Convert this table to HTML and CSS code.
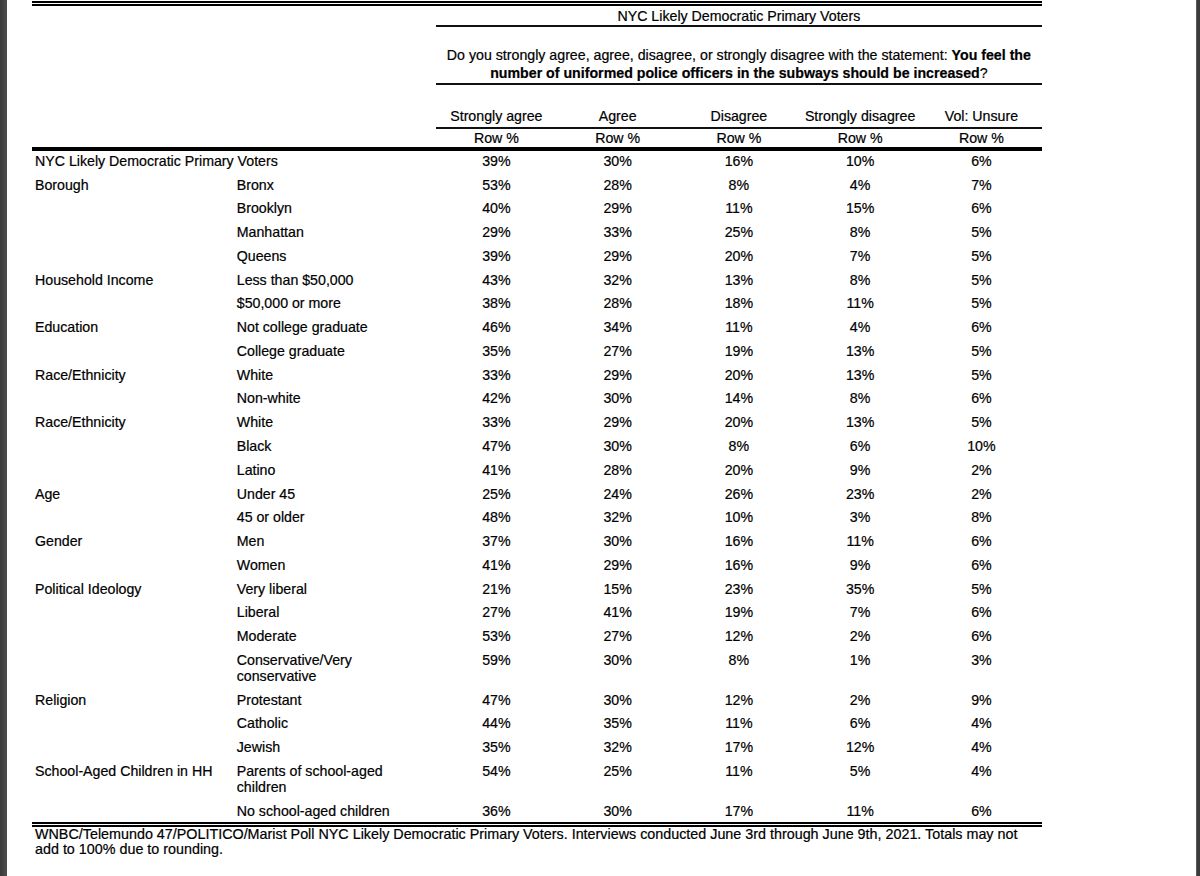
FILE: index.html
```html
<!DOCTYPE html>
<html lang="en">
<head>
<meta charset="utf-8">
<title>NYC Likely Democratic Primary Voters – Marist Poll</title>
<link rel="stylesheet" href="styles.css">
</head>
<body>
<div class="viewer">
  <div class="edge-left"></div>
  <main class="page">
    <table class="poll">
      <colgroup>
        <col class="c1">
        <col class="c2">
        <col class="cd"><col class="cd"><col class="cd"><col class="cd"><col class="cd">
      </colgroup>
      <thead>
        <tr class="r-title">
          <th class="corner" colspan="2" rowspan="4"></th>
          <th class="title" colspan="5">NYC Likely Democratic Primary Voters</th>
        </tr>
        <tr class="r-question">
          <th class="question" colspan="5">Do you strongly agree, agree, disagree, or strongly disagree with the statement: <b>You feel the</b><br><b>number of uniformed police officers in the subways should be increased</b>?</th>
        </tr>
        <tr class="r-cols">
          <th>Strongly agree</th>
          <th>Agree</th>
          <th>Disagree</th>
          <th>Strongly disagree</th>
          <th>Vol: Unsure</th>
        </tr>
        <tr class="r-unit">
          <th>Row %</th><th>Row %</th><th>Row %</th><th>Row %</th><th>Row %</th>
        </tr>
      </thead>
      <tbody>
        <tr class="first">
          <td class="lbl" colspan="2">NYC Likely Democratic Primary Voters</td>
          <td>39%</td><td>30%</td><td>16%</td><td>10%</td><td>6%</td>
        </tr>
        <tr>
          <td class="lbl" rowspan="4">Borough</td>
          <td class="sub">Bronx</td>
          <td>53%</td><td>28%</td><td>8%</td><td>4%</td><td>7%</td>
        </tr>
        <tr>
          <td class="sub">Brooklyn</td>
          <td>40%</td><td>29%</td><td>11%</td><td>15%</td><td>6%</td>
        </tr>
        <tr>
          <td class="sub">Manhattan</td>
          <td>29%</td><td>33%</td><td>25%</td><td>8%</td><td>5%</td>
        </tr>
        <tr>
          <td class="sub">Queens</td>
          <td>39%</td><td>29%</td><td>20%</td><td>7%</td><td>5%</td>
        </tr>
        <tr>
          <td class="lbl" rowspan="2">Household Income</td>
          <td class="sub">Less than $50,000</td>
          <td>43%</td><td>32%</td><td>13%</td><td>8%</td><td>5%</td>
        </tr>
        <tr>
          <td class="sub">$50,000 or more</td>
          <td>38%</td><td>28%</td><td>18%</td><td>11%</td><td>5%</td>
        </tr>
        <tr>
          <td class="lbl" rowspan="2">Education</td>
          <td class="sub">Not college graduate</td>
          <td>46%</td><td>34%</td><td>11%</td><td>4%</td><td>6%</td>
        </tr>
        <tr>
          <td class="sub">College graduate</td>
          <td>35%</td><td>27%</td><td>19%</td><td>13%</td><td>5%</td>
        </tr>
        <tr>
          <td class="lbl" rowspan="2">Race/Ethnicity</td>
          <td class="sub">White</td>
          <td>33%</td><td>29%</td><td>20%</td><td>13%</td><td>5%</td>
        </tr>
        <tr>
          <td class="sub">Non-white</td>
          <td>42%</td><td>30%</td><td>14%</td><td>8%</td><td>6%</td>
        </tr>
        <tr>
          <td class="lbl" rowspan="3">Race/Ethnicity</td>
          <td class="sub">White</td>
          <td>33%</td><td>29%</td><td>20%</td><td>13%</td><td>5%</td>
        </tr>
        <tr>
          <td class="sub">Black</td>
          <td>47%</td><td>30%</td><td>8%</td><td>6%</td><td>10%</td>
        </tr>
        <tr>
          <td class="sub">Latino</td>
          <td>41%</td><td>28%</td><td>20%</td><td>9%</td><td>2%</td>
        </tr>
        <tr>
          <td class="lbl" rowspan="2">Age</td>
          <td class="sub">Under 45</td>
          <td>25%</td><td>24%</td><td>26%</td><td>23%</td><td>2%</td>
        </tr>
        <tr>
          <td class="sub">45 or older</td>
          <td>48%</td><td>32%</td><td>10%</td><td>3%</td><td>8%</td>
        </tr>
        <tr>
          <td class="lbl" rowspan="2">Gender</td>
          <td class="sub">Men</td>
          <td>37%</td><td>30%</td><td>16%</td><td>11%</td><td>6%</td>
        </tr>
        <tr>
          <td class="sub">Women</td>
          <td>41%</td><td>29%</td><td>16%</td><td>9%</td><td>6%</td>
        </tr>
        <tr>
          <td class="lbl" rowspan="4">Political Ideology</td>
          <td class="sub">Very liberal</td>
          <td>21%</td><td>15%</td><td>23%</td><td>35%</td><td>5%</td>
        </tr>
        <tr>
          <td class="sub">Liberal</td>
          <td>27%</td><td>41%</td><td>19%</td><td>7%</td><td>6%</td>
        </tr>
        <tr>
          <td class="sub">Moderate</td>
          <td>53%</td><td>27%</td><td>12%</td><td>2%</td><td>6%</td>
        </tr>
        <tr>
          <td class="sub">Conservative/Very conservative</td>
          <td>59%</td><td>30%</td><td>8%</td><td>1%</td><td>3%</td>
        </tr>
        <tr>
          <td class="lbl" rowspan="3">Religion</td>
          <td class="sub">Protestant</td>
          <td>47%</td><td>30%</td><td>12%</td><td>2%</td><td>9%</td>
        </tr>
        <tr>
          <td class="sub">Catholic</td>
          <td>44%</td><td>35%</td><td>11%</td><td>6%</td><td>4%</td>
        </tr>
        <tr>
          <td class="sub">Jewish</td>
          <td>35%</td><td>32%</td><td>17%</td><td>12%</td><td>4%</td>
        </tr>
        <tr>
          <td class="lbl" rowspan="2">School-Aged Children in HH</td>
          <td class="sub">Parents of school-aged children</td>
          <td>54%</td><td>25%</td><td>11%</td><td>5%</td><td>4%</td>
        </tr>
        <tr class="last">
          <td class="sub">No school-aged children</td>
          <td>36%</td><td>30%</td><td>17%</td><td>11%</td><td>6%</td>
        </tr>
      </tbody>
    </table>
    <p class="footnote">WNBC/Telemundo 47/POLITICO/Marist Poll NYC Likely Democratic Primary Voters. Interviews conducted June 3rd through June 9th, 2021. Totals may not add to 100% due to rounding.</p>
  </main>
  <div class="edge-right"></div>
</div>
</body>
</html>
```

FILE: styles.css
```css
* {
  box-sizing: border-box;
}

html,
body {
  margin: 0;
  padding: 0;
}

body {
  background: #fff;
  color: #000;
  font-family: "Liberation Sans", Arial, sans-serif;
  font-size: 14.2px;
  -webkit-text-stroke: 0.2px #000;
}

.viewer {
  display: flex;
  min-height: 876px;
}

.edge-left {
  flex: none;
  width: 7px;
  background: linear-gradient(to right, #3a3a3a, #4e4e4e);
}

.edge-right {
  flex: none;
  width: 4px;
  background: #3c3c3c;
  border-left: 1px solid #5a5a5a;
}

.page {
  flex: 1;
  background: #fff;
  padding: 1px 0 0 25px;
}

/* ---------- table ---------- */

.poll {
  width: 1010px;
  table-layout: fixed;
  border-collapse: separate;
  border-spacing: 0;
  border-top: 5px double #000;
}

.poll col.c1 { width: 201.75px; }
.poll col.c2 { width: 202px; }
.poll col.cd { width: 121.25px; }

.poll th,
.poll td {
  padding: 0;
  font-weight: normal;
  line-height: 16px;
  vertical-align: top;
  text-align: center;
}

.poll th.corner {
  border-bottom: 4px solid #000;
}

.r-title th {
  padding: 2px 0 0.5px;
  border-bottom: 2px solid #111;
}

.r-question th {
  padding: 19.6px 0 1.4px;
  line-height: 18px;
  border-bottom: 2px solid #111;
}

.r-question b {
  font-weight: bold;
}

.r-cols th {
  padding: 22.3px 0 3.5px;
  border-bottom: 2px solid #111;
}

.r-unit th {
  padding: 1.2px 0 1px;
  border-bottom: 4px solid #000;
}

.poll tbody td {
  padding: 4px 0 3.78px;
}

.poll tbody tr.first td {
  padding-top: 1.35px;
}

.poll tbody td.lbl {
  text-align: left;
  padding-left: 3px;
}

.poll tbody td.sub {
  text-align: left;
  padding-left: 3px;
  padding-right: 30px;
}

/* ---------- footnote ---------- */

.footnote {
  width: 1010px;
  margin: 0;
  padding: 0 3px;
  border-top: 5px double #000;
  font-size: 14.33px;
  line-height: 15px;
}
```
